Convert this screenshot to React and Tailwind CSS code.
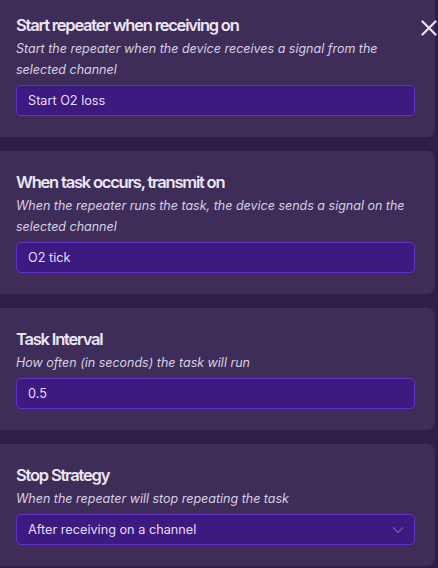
import React from "react";

function Card({ title, desc, value, select }) {
  return (
    <div className="w-[443px] ml-[-8px] shrink-0 rounded-lg bg-[#3e2d58] pl-[24px] pr-[20px] pt-[19px] pb-[21px]">
      <div className="text-[16.5px] leading-[25px] font-semibold tracking-[-1.2px] text-[#ece6f3] whitespace-nowrap">{title}</div>
      <div className="text-[12.5px] leading-[21px] italic text-[#d8d0e3] whitespace-nowrap">{desc}</div>
      <div className="mt-[5px] h-[31px] rounded-[5px] border border-[#6432c9] bg-[#3d1a7f] flex items-center justify-between pl-[11px] pr-[10px]">
        <span className="text-[12.7px] text-[#e6def3]">{value}</span>
        {select && (
          <svg width="12" height="8" viewBox="0 0 12 8" fill="none">
            <path d="M1 1.5 L6 6.5 L11 1.5" stroke="#7458a8" strokeWidth="1.2" />
          </svg>
        )}
      </div>
    </div>
  );
}

export default function App() {
  return (
    <div
      className="relative w-[438px] h-[568px] overflow-hidden bg-[#2f1f48]"
      style={{ fontFamily: "Inter, 'Noto Sans', sans-serif" }}
    >
      <div className="flex flex-col gap-[14px] mt-[-6px]">
        <Card
          title="Start repeater when receiving on"
          desc={<>Start the repeater when the device receives a signal from the<br />selected channel</>}
          value="Start O2 loss"
        />
        <Card
          title="When task occurs, transmit on"
          desc={<>When the repeater runs the task, the device sends a signal on the<br />selected channel</>}
          value="O2 tick"
        />
        <Card
          title="Task Interval"
          desc="How often (in seconds) the task will run"
          value="0.5"
        />
        <Card
          title="Stop Strategy"
          desc="When the repeater will stop repeating the task"
          value="After receiving on a channel"
          select
        />
      </div>
      <svg className="absolute left-[421px] top-[20px]" width="16" height="16" viewBox="0 0 16 16" fill="none">
        <path d="M1.5 1.5 L14.5 14.5 M14.5 1.5 L1.5 14.5" stroke="#ebe4f3" strokeWidth="2.2" strokeLinecap="round" />
      </svg>
    </div>
  );
}
